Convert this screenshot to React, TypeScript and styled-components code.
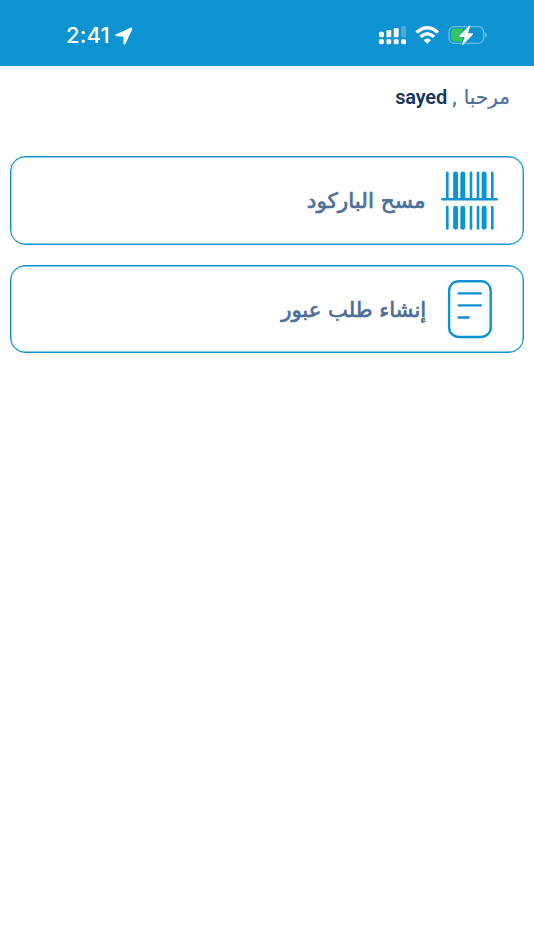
import React from 'react';
import styled, { createGlobalStyle } from 'styled-components';

const BLUE = '#0d92d2';

const GlobalStyle = createGlobalStyle`
  * { box-sizing: border-box; }
  body { margin: 0; background: #fff; }
`;

const Screen = styled.div`
  min-height: 950px;
  background: #fff;
  font-family: 'DejaVu Sans', sans-serif;
  overflow: hidden;
`;

const StatusBar = styled.header`
  height: 66px;
  background: ${BLUE};
  display: flex;
  justify-content: space-between;
  align-items: flex-start;
  padding: 22px 46px 0 66px;
`;

const Clock = styled.div`
  display: flex;
  align-items: center;
  gap: 5px;
  height: 27px;
  color: #fff;
  font: 500 22px/27px Inter, sans-serif;
  letter-spacing: 0.1px;
`;

const Indicators = styled.div`
  display: flex;
  align-items: center;
  height: 26px;
`;

const Greeting = styled.div`
  display: flex;
  align-items: center;
  height: 62px;
  padding-right: 24px;
  color: #4d6f99;
`;

const Phrase = styled.span<{ $size: number; $scale: number; $weight: number }>`
  display: block;
  flex: none;
  white-space: nowrap;
  font-size: ${(p) => p.$size}px;
  -webkit-text-stroke: ${(p) => p.$weight}px currentColor;
  line-height: 30px;
  transform: scaleX(${(p) => p.$scale});
  transform-origin: right center;
`;

const GreetingWord = styled.div`
  width: 48px;
`;

const Comma = styled.span`
  width: 15px;
  text-align: center;
  font: 500 20px/30px Roboto, sans-serif;
`;

const UserName = styled.b`
  color: #15355c;
  font: 600 20px/30px Roboto, sans-serif;
  letter-spacing: -0.2px;
`;

const Menu = styled.main`
  display: flex;
  flex-direction: column;
  gap: 20px;
  padding: 28px 10px 0;
`;

const Card = styled.button`
  display: flex;
  align-items: center;
  gap: 15px;
  width: 100%;
  height: 88.7px;
  padding: 1px 25px 0 0;
  border: 1px solid ${BLUE};
  border-radius: 15px;
  box-shadow: inset 0 0 0 0.4px ${BLUE};
  background: #fff;
  color: #4d6f99;
  font-family: inherit;
`;

const LocationIcon = () => (
  <svg width="18" height="18" viewBox="0 0 18 18" fill="#fff">
    <path d="M15.6.7 1.1 7.3C-.2 7.9.1 9.3 1.5 9.3l6.4.1c.3 0 .4.1.4.4l.1 6.5c0 1.4 1.5 1.7 2.1.4L17.2 2.3c.5-1.2-.4-2.1-1.6-1.6Z" />
  </svg>
);

const StatusIcons = () => (
  <svg width="110" height="26" viewBox="378 22 110 26" fill="#fff">
    <rect x="379" y="31.8" width="4.8" height="5.4" rx="1.2" />
    <rect x="386.4" y="30" width="4.8" height="7.2" rx="1.2" />
    <rect x="393.8" y="28" width="4.8" height="9.2" rx="1.2" />
    <rect x="401.2" y="26" width="4.8" height="11.2" rx="1.2" opacity=".25" />
    <rect x="379" y="39.2" width="4.8" height="5" rx="1.4" />
    <rect x="386.4" y="39.2" width="4.8" height="5" rx="1.4" />
    <rect x="393.8" y="39.2" width="4.8" height="5" rx="1.4" />
    <rect x="401.2" y="39.2" width="4.8" height="5" rx="1.4" />
    <g fill="none" stroke="#fff" strokeWidth="3.4">
      <path d="M416.6 32.6Q427.3 23 438 32.6" />
      <path d="M420.5 36.8Q427.3 30.7 434.1 36.8" />
    </g>
    <path d="M423.6 40.1Q427.3 37 431 40.1L427.9 43.2Q427.3 43.7 426.7 43.2Z" />
    <rect x="449" y="26.6" width="34.6" height="16.8" rx="5.2" fill="none" stroke="#fff" strokeOpacity=".42" strokeWidth="1.3" />
    <path d="M485.1 32.3c2.2 1 2.2 4.6 0 5.6Z" opacity=".45" />
    <path d="M454.6 28.4H463v13.2h-8.4a3.5 3.5 0 0 1-3.5-3.5v-6.2a3.5 3.5 0 0 1 3.5-3.5Z" fill="#35c759" />
    <path d="M469.1 25.8 459.3 35.7c-.5.6-.2 1.2.5 1.2h4.8l-2.3 7c-.3 1 .5 1.4 1.1.7l9.5-10.2c.5-.6.2-1.2-.5-1.2h-4.5l2.3-6.7c.3-1-.5-1.4-1.1-.7Z" stroke={BLUE} strokeWidth="1.4" paintOrder="stroke" />
  </svg>
);

const bars = [
  [447.3, 2.6], [455.6, 4.9], [462.8, 4.9], [471, 2.6],
  [478, 2.6], [484.1, 4.9], [492.3, 2.6],
];

const BarcodeIcon = () => (
  <svg width="57" height="60" viewBox="441 171.2 57 60" stroke={BLUE} strokeLinecap="round">
    {bars.map(([x, w]) => (
      <React.Fragment key={x}>
        <path d={`M${x} ${171.6 + w / 2}V198`} strokeWidth={w} />
        <path d={`M${x} ${205.9 + w / 2}V${230 - w / 2}`} strokeWidth={w} />
      </React.Fragment>
    ))}
    <path d="M442.5 199.4H496.7" strokeWidth="2.6" />
  </svg>
);

const DocumentIcon = () => (
  <svg width="57" height="60" viewBox="441.1 280.2 57 60" fill="none" stroke={BLUE} strokeWidth="2.4" strokeLinecap="round">
    <rect x="449.2" y="281.4" width="41.6" height="55.8" rx="9.5" />
    <path d="M458.8 293.6H481M458.8 305.6H481M458.8 317.7H468.8" />
  </svg>
);

export default function App() {
  return (
    <Screen>
      <GlobalStyle />
      <StatusBar>
        <Clock>2:41<LocationIcon /></Clock>
        <Indicators><StatusIcons /></Indicators>
      </StatusBar>
      <Greeting dir="rtl">
        <GreetingWord><Phrase $size={20} $scale={1} $weight={0.2}>مرحبا</Phrase></GreetingWord>
        <Comma>,</Comma>
        <UserName>sayed</UserName>
      </Greeting>
      <Menu dir="rtl">
        <Card>
          <BarcodeIcon />
          <Phrase $weight={0.7} $size={21} $scale={1.028}>مسح الباركود</Phrase>
        </Card>
        <Card>
          <DocumentIcon />
          <Phrase $weight={0.7} $size={21} $scale={1.005}>إنشاء طلب عبور</Phrase>
        </Card>
      </Menu>
    </Screen>
  );
}
